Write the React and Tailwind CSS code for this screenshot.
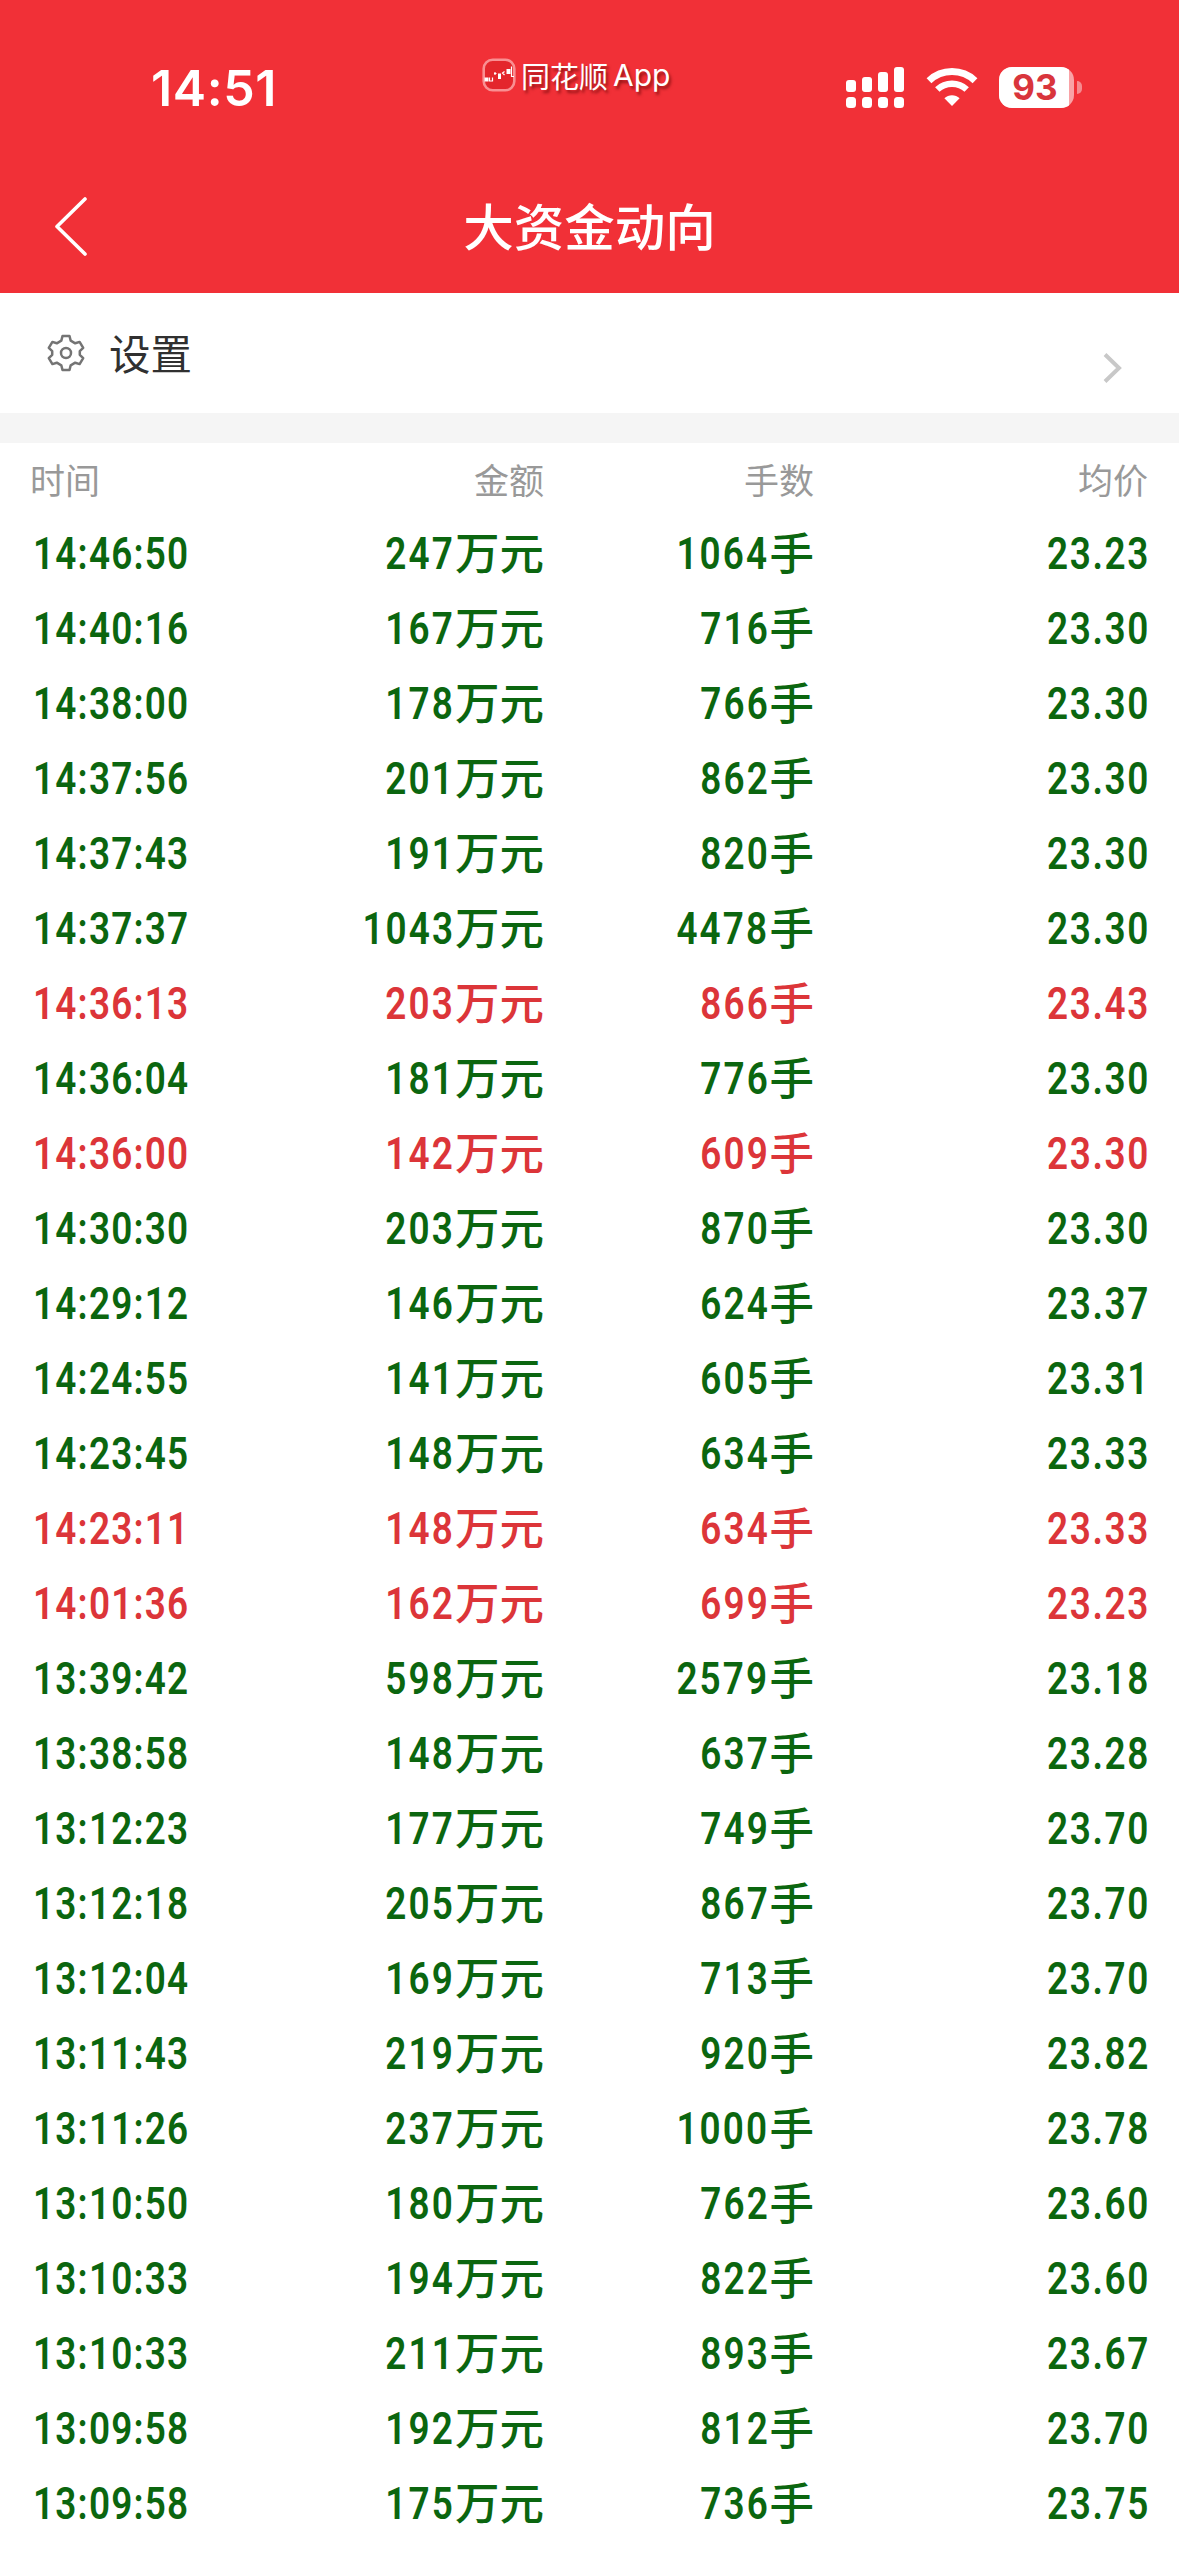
const COLUMNS = ['时间', '金额', '手数', '均价'];

// [time, amount, lots, price, side]
const TRADES = [
  ['14:46:50', '247', '1064', '23.23', 'sell'],
  ['14:40:16', '167', '716', '23.30', 'sell'],
  ['14:38:00', '178', '766', '23.30', 'sell'],
  ['14:37:56', '201', '862', '23.30', 'sell'],
  ['14:37:43', '191', '820', '23.30', 'sell'],
  ['14:37:37', '1043', '4478', '23.30', 'sell'],
  ['14:36:13', '203', '866', '23.43', 'buy'],
  ['14:36:04', '181', '776', '23.30', 'sell'],
  ['14:36:00', '142', '609', '23.30', 'buy'],
  ['14:30:30', '203', '870', '23.30', 'sell'],
  ['14:29:12', '146', '624', '23.37', 'sell'],
  ['14:24:55', '141', '605', '23.31', 'sell'],
  ['14:23:45', '148', '634', '23.33', 'sell'],
  ['14:23:11', '148', '634', '23.33', 'buy'],
  ['14:01:36', '162', '699', '23.23', 'buy'],
  ['13:39:42', '598', '2579', '23.18', 'sell'],
  ['13:38:58', '148', '637', '23.28', 'sell'],
  ['13:12:23', '177', '749', '23.70', 'sell'],
  ['13:12:18', '205', '867', '23.70', 'sell'],
  ['13:12:04', '169', '713', '23.70', 'sell'],
  ['13:11:43', '219', '920', '23.82', 'sell'],
  ['13:11:26', '237', '1000', '23.78', 'sell'],
  ['13:10:50', '180', '762', '23.60', 'sell'],
  ['13:10:33', '194', '822', '23.60', 'sell'],
  ['13:10:33', '211', '893', '23.67', 'sell'],
  ['13:09:58', '192', '812', '23.70', 'sell'],
  ['13:09:58', '175', '736', '23.75', 'sell'],
];

function SignalIcon() {
  return (
    <svg className="w-[60px] h-[42px]" viewBox="0 0 60 42" fill="#fff">
      <rect x="1" y="13" width="10" height="12" rx="3" />
      <rect x="17" y="10" width="10" height="15" rx="3" />
      <rect x="33" y="5" width="10" height="20" rx="3" />
      <rect x="49" y="0" width="10" height="25" rx="3" />
      <rect x="1" y="30" width="10" height="11" rx="3.5" />
      <rect x="17" y="30" width="10" height="11" rx="3.5" />
      <rect x="33" y="30" width="10" height="11" rx="3.5" />
      <rect x="49" y="30" width="10" height="11" rx="3.5" />
    </svg>
  );
}

function WifiIcon() {
  return (
    <svg className="w-[52px] h-[40px]" viewBox="0 0 52 40" fill="none" stroke="#fff">
      <path d="M3 13.700a33.5 33.5 0 0 1 46 0" strokeWidth="7" />
      <path d="M11.3 22.500a21.5 21.5 0 0 1 29.4 0" strokeWidth="6.4" />
      <path d="M26 39l-7.6-7.7c4.2-4 11-4 15.2 0z" fill="#fff" stroke="none" />
    </svg>
  );
}

function Battery() {
  return (
    <div className="flex items-center">
      <div className="w-[75px] h-[41px] rounded-[13px] overflow-hidden bg-[#f9a2a6]">
        <div className="w-[70px] h-full bg-white flex items-center justify-center pl-[2px] font-['Inter'] font-bold text-[35px] leading-none text-[#d9353c]">
          93
        </div>
      </div>
      <div className="ml-[3px] w-[5px] h-[13px] rounded-r-full bg-[#f68a8f]" />
    </div>
  );
}

function AppBadge() {
  return (
    <div className="flex items-center text-white text-[29px] leading-none [text-shadow:2px_3px_3px_rgba(90,0,0,0.6)]">
      <svg className="w-[34px] h-[34px] mr-[5px]" viewBox="0 0 34 34" fill="none">
        <rect x="1.7" y="1.7" width="30.6" height="30.6" rx="9" fill="#e4262c" stroke="#f98f92" strokeWidth="2.6" />
        <path d="M2.5 19.5h4v4h-4zM16 15.5h3v5.5h-3zM24.5 11h4v5h-4z" fill="#fff" />
        <path d="M7.500 19.5v3.5h3v-3.5M13 14v3M12 15.5h2.5M22.5 13.5l-2 1.500 2 2M29.5 8.500v10h2.500" stroke="#fff" strokeWidth="1.200" />
      </svg>
      <span>同花顺</span>
      <span className="ml-[5px] font-['Inter'] text-[30px]">App</span>
    </div>
  );
}

function GearIcon() {
  return (
    <svg className="w-[38px] h-[38px]" viewBox="0 0 38 38" fill="none" stroke="#747474" strokeWidth="2.500" strokeLinejoin="round">
      <path d="M15.500 2h7l1.200 4.700 4.500 2.600 4.400-1.400 3.600 6-3.400 3.300v3.600l3.400 3.300-3.600 6-4.400-1.400-4.500 2.600-1.200 4.700h-7l-1.200-4.700-4.500-2.600-4.400 1.400-3.600-6 3.400-3.300v-3.600l-3.400-3.300 3.600-6 4.400 1.400 4.500-2.600z" />
      <circle cx="19" cy="19" r="5" />
    </svg>
  );
}

function TradeRow({ trade }) {
  const [time, amount, lots, price, side] = trade;
  const color = side === 'buy' ? 'text-[#dc3539]' : 'text-[#0b660f]';
  return (
    <div className={`grid grid-cols-[199px_312px_270px_334px] h-[75px] items-center pl-[33px] text-[45px] leading-none font-medium ${color}`}>
      <div className="font-['Roboto'] font-semibold tracking-[1.5px] origin-left scale-x-[0.82]">{time}</div>
      <div className="flex items-center justify-end">
        <span className="font-['Roboto'] font-semibold tracking-[2.6px] origin-right scale-x-[0.82]">{amount}</span>
        <span className="text-[44.5px] pb-[5px]">万元</span>
      </div>
      <div className="flex items-center justify-end">
        <span className="font-['Roboto'] font-semibold tracking-[2.6px] origin-right scale-x-[0.82]">{lots}</span>
        <span className="text-[44.5px] pb-[5px]">手</span>
      </div>
      <div className="-mr-[2px] font-['Roboto'] font-semibold text-right tracking-[2px] origin-right scale-x-[0.82]">{price}</div>
    </div>
  );
}

export default function App() {
  return (
    <div className="w-[1179px] h-[2556px] overflow-hidden bg-white font-['Noto_Sans_CJK_SC',sans-serif]">
      <header className="h-[293px] bg-[#f13037]">
        <div className="grid grid-cols-[482px_1fr_auto] h-[160px] pr-[97px]">
          <div className="pl-[151px] pt-[63px] font-['Inter'] font-semibold text-[50px] leading-[50px] tracking-[0.6px] text-white">14:51</div>
          <div className="pt-[58px]">
            <AppBadge />
          </div>
          <div className="flex items-start gap-[21px] pt-[67px]">
            <SignalIcon />
            <WifiIcon />
            <Battery />
          </div>
        </div>
        <div className="grid grid-cols-[1fr_auto_1fr] items-center h-[129px] text-white">
          <svg className="ml-[51px] w-9 h-[62px]" viewBox="0 0 36 62" fill="none" stroke="#fff" strokeWidth="3.600" strokeLinecap="round" strokeLinejoin="round">
            <path d="M34 5L6 32.500 34 60" />
          </svg>
          <h1 className="text-[50.500px] leading-none font-medium">大资金动向</h1>
        </div>
      </header>

      <div className="flex items-center h-[120px] pl-[47px] pr-[57px]">
        <GearIcon />
        <span className="ml-6 text-[41.500px] leading-none text-[#303030]">设置</span>
        <svg className="ml-auto mt-[29px] w-5 h-8" viewBox="0 0 20 32" fill="none" stroke="#c8c8c8" strokeWidth="4">
          <path d="M3 2.500l14 13.500L3 29.500" />
        </svg>
      </div>

      <div className="h-[30px] bg-[#f5f5f5]" />

      <div className="grid grid-cols-[202px_312px_270px_334px] h-[73px] items-center pl-[30px] pb-[3px] text-[35px] leading-none text-[#999]">
        {COLUMNS.map((label, i) => (
          <div key={label} className={i === 0 ? '' : 'text-right'}>{label}</div>
        ))}
      </div>

      {TRADES.map((trade, i) => (
        <TradeRow key={i} trade={trade} />
      ))}
    </div>
  );
}
